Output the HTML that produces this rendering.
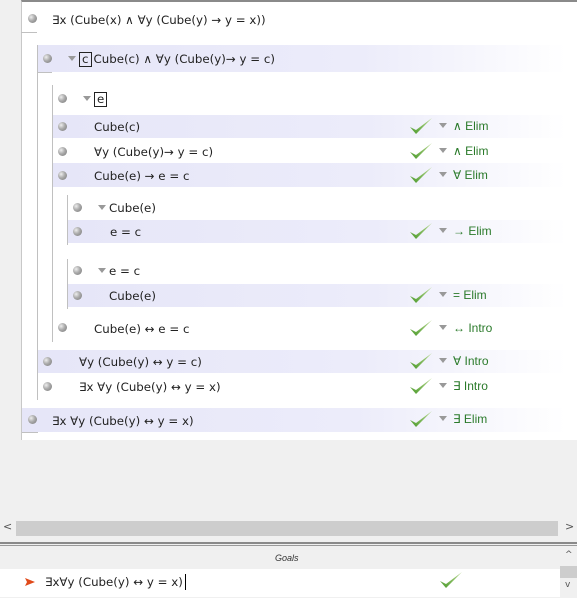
<!DOCTYPE html>
<html><head><meta charset="utf-8"><style>
*{margin:0;padding:0;box-sizing:border-box}
body{width:577px;height:598px;background:#f0f0f0;position:relative;overflow:hidden;font-family:"DejaVu Sans","Liberation Sans",sans-serif;font-size:11.8px;color:#222}
.a{position:absolute}
.panel{left:21px;top:0;width:556px;height:440px;background:#fff;border-left:1px solid #c8c8c8;border-top:2px solid #8a8a8a}
.row{position:absolute;right:0;height:24px}
.hl{background:linear-gradient(to right,#e6e6f8 0%,#ececfa 60%,#fff 98%)}
.b{position:absolute;width:9px;height:9px;border-radius:50%;background:radial-gradient(circle at 35% 35%,#eee 0%,#aaa 45%,#777 100%)}
.t{position:absolute;white-space:nowrap;line-height:14px}
.tri{position:absolute;width:0;height:0;border-left:4px solid transparent;border-right:4px solid transparent;border-top:5px solid #999}
.r{position:absolute;left:453px;color:#2a7a2a;font-family:"Liberation Sans",sans-serif;font-size:12px;white-space:nowrap;line-height:14px}
.ck{position:absolute;left:408px}
.vl{position:absolute;width:1px;background:#c0c0c0}
.box{display:inline-block;border:1px solid #222;padding:0 2px;line-height:13px;margin-right:2px}
</style></head><body>
<svg width="0" height="0" style="position:absolute"><defs><linearGradient id="g" x1="0" y1="1" x2="1" y2="0"><stop offset="0" stop-color="#4a9a2a"/><stop offset="1" stop-color="#b8d890"/></linearGradient></defs></svg>
<div class="a panel"></div>

<div class="vl" style="left:37px;top:45px;height:355px"></div>
<div class="vl" style="left:52px;top:85px;height:257px"></div>
<div class="vl" style="left:67px;top:195px;height:50px"></div>
<div class="vl" style="left:67px;top:259px;height:50px"></div>
<div class="a" style="left:21px;top:32px;width:16px;height:1px;background:#c0c0c0"></div>
<div class="a" style="left:37px;top:72px;width:15px;height:1px;background:#c0c0c0"></div>
<div class="a" style="left:22px;top:432px;width:16px;height:1px;background:#c0c0c0"></div>

<div class="row hl" style="left:38px;top:45px;height:27px"></div>
<div class="row hl" style="left:53px;top:115px;height:23px"></div>
<div class="row hl" style="left:53px;top:163px;height:24px"></div>
<div class="row hl" style="left:68px;top:220px;height:23px"></div>
<div class="row hl" style="left:68px;top:284px;height:23px"></div>
<div class="row hl" style="left:38px;top:350px;height:23px"></div>
<div class="row hl" style="left:22px;top:408px;height:24px"></div>

<div class="b" style="left:28px;top:14px"></div>
<div class="b" style="left:43px;top:54px"></div>
<div class="b" style="left:58px;top:94px"></div>
<div class="b" style="left:58px;top:122px"></div>
<div class="b" style="left:58px;top:147px"></div>
<div class="b" style="left:58px;top:171px"></div>
<div class="b" style="left:73px;top:203px"></div>
<div class="b" style="left:73px;top:227px"></div>
<div class="b" style="left:73px;top:266px"></div>
<div class="b" style="left:73px;top:291px"></div>
<div class="b" style="left:58px;top:323px"></div>
<div class="b" style="left:43px;top:357px"></div>
<div class="b" style="left:43px;top:382px"></div>
<div class="b" style="left:28px;top:415px"></div>

<div class="tri" style="left:68px;top:56px"></div>
<div class="tri" style="left:83px;top:96px"></div>
<div class="tri" style="left:98px;top:205px"></div>
<div class="tri" style="left:98px;top:268px"></div>

<div class="t" style="left:52px;top:13px">∃x (Cube(x) ∧ ∀y (Cube(y) → y = x))</div>
<div class="t" style="left:79px;top:52px"><span class="box">c</span>Cube(c) ∧ ∀y (Cube(y)→ y = c)</div>
<div class="t" style="left:94px;top:92px"><span class="box">e</span></div>
<div class="t" style="left:94px;top:120px">Cube(c)</div>
<div class="t" style="left:94px;top:145px">∀y (Cube(y)→ y = c)</div>
<div class="t" style="left:94px;top:169px">Cube(e) → e = c</div>
<div class="t" style="left:109px;top:201px">Cube(e)</div>
<div class="t" style="left:110px;top:225px">e = c</div>
<div class="t" style="left:109px;top:264px">e = c</div>
<div class="t" style="left:109px;top:289px">Cube(e)</div>
<div class="t" style="left:94px;top:322px">Cube(e) ↔ e = c</div>
<div class="t" style="left:79px;top:355px">∀y (Cube(y) ↔ y = c)</div>
<div class="t" style="left:79px;top:380px">∃x ∀y (Cube(y) ↔ y = x)</div>
<div class="t" style="left:52px;top:414px">∃x ∀y (Cube(y) ↔ y = x)</div>

<svg class="ck" style="top:117px" width="26" height="20"><path d="M2 10 L8 17 L24 1 L8 13 Z" fill="url(#g)"/></svg>
<div class="tri" style="left:439px;top:123px"></div><div class="r" style="top:119px">∧ Elim</div>
<svg class="ck" style="top:142px" width="26" height="20"><path d="M2 10 L8 17 L24 1 L8 13 Z" fill="url(#g)"/></svg>
<div class="tri" style="left:439px;top:148px"></div><div class="r" style="top:144px">∧ Elim</div>
<svg class="ck" style="top:166px" width="26" height="20"><path d="M2 10 L8 17 L24 1 L8 13 Z" fill="url(#g)"/></svg>
<div class="tri" style="left:439px;top:172px"></div><div class="r" style="top:168px">∀ Elim</div>
<svg class="ck" style="top:222px" width="26" height="20"><path d="M2 10 L8 17 L24 1 L8 13 Z" fill="url(#g)"/></svg>
<div class="tri" style="left:439px;top:228px"></div><div class="r" style="top:224px">→ Elim</div>
<svg class="ck" style="top:286px" width="26" height="20"><path d="M2 10 L8 17 L24 1 L8 13 Z" fill="url(#g)"/></svg>
<div class="tri" style="left:439px;top:292px"></div><div class="r" style="top:288px">= Elim</div>
<svg class="ck" style="top:319px" width="26" height="20"><path d="M2 10 L8 17 L24 1 L8 13 Z" fill="url(#g)"/></svg>
<div class="tri" style="left:439px;top:325px"></div><div class="r" style="top:321px">↔ Intro</div>
<svg class="ck" style="top:352px" width="26" height="20"><path d="M2 10 L8 17 L24 1 L8 13 Z" fill="url(#g)"/></svg>
<div class="tri" style="left:439px;top:358px"></div><div class="r" style="top:354px">∀ Intro</div>
<svg class="ck" style="top:377px" width="26" height="20"><path d="M2 10 L8 17 L24 1 L8 13 Z" fill="url(#g)"/></svg>
<div class="tri" style="left:439px;top:383px"></div><div class="r" style="top:379px">∃ Intro</div>
<svg class="ck" style="top:410px" width="26" height="20"><path d="M2 10 L8 17 L24 1 L8 13 Z" fill="url(#g)"/></svg>
<div class="tri" style="left:439px;top:416px"></div><div class="r" style="top:412px">∃ Elim</div>

<div class="a" style="left:0;top:520px;width:577px;height:17px;background:#f0f0f0"></div>
<div class="a" style="left:16px;top:521px;width:542px;height:15px;background:#cdcdcd"></div>
<div class="a" style="left:3px;top:520px;font-size:11px;color:#555">&lt;</div>
<div class="a" style="left:565px;top:520px;font-size:11px;color:#555">&gt;</div>

<div class="a" style="left:0;top:542px;width:577px;height:2px;background:#8a8a8a"></div>
<div class="a" style="left:0;top:545px;width:577px;height:1px;background:#9a9a9a"></div>

<div class="a" style="left:0;top:547px;width:560px;height:22px;background:#f0f0f0"></div>
<div class="a" style="left:275px;top:553px;font-family:'Liberation Sans',sans-serif;font-size:9px;font-style:italic;color:#333">Goals</div>
<div class="a" style="left:0;top:569px;width:560px;height:28px;background:#fff"></div>
<svg class="a" style="left:25px;top:578px" width="10" height="8"><path d="M0 0 L10 4 L0 8 L2 4 Z" fill="#e04a1a"/></svg>
<div class="t" style="left:45px;top:575px">∃x∀y (Cube(y) ↔ y = x)</div>
<div class="a" style="left:185px;top:574px;width:1px;height:16px;background:#000"></div>
<svg class="a" style="left:438px;top:571px" width="26" height="20"><path d="M2 10 L8 17 L24 1 L8 13 Z" fill="url(#g)"/></svg>
<div class="a" style="left:560px;top:547px;width:17px;height:51px;background:#f0f0f0"></div>
<div class="a" style="left:560px;top:566px;width:17px;height:12px;background:#cdcdcd"></div>
<div class="a" style="left:565px;top:550px;font-size:9px;color:#555">^</div>
<div class="a" style="left:565px;top:580px;font-size:9px;color:#555">v</div>
</body></html>
